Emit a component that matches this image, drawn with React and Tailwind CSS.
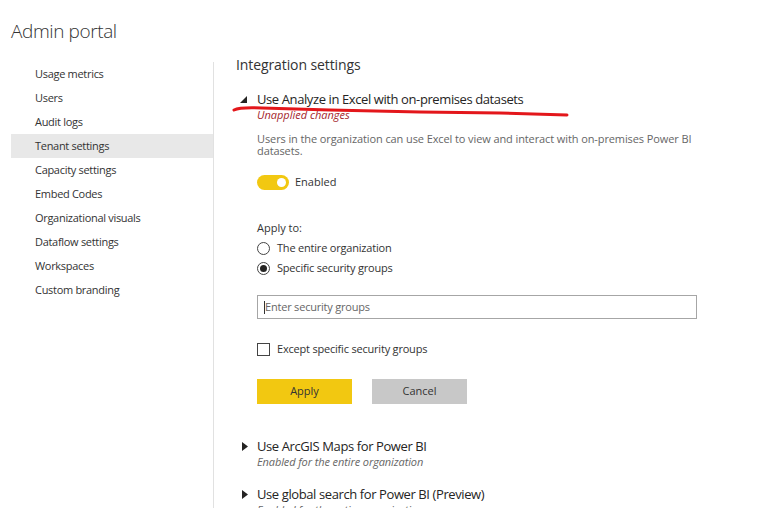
import React from 'react'

const navItems = [
    'Usage metrics',
    'Users',
    'Audit logs',
    'Tenant settings',
    'Capacity settings',
    'Embed Codes',
    'Organizational visuals',
    'Dataflow settings',
    'Workspaces',
    'Custom branding',
]

const CaretDown = () => (
    <svg width="7" height="7" viewBox="0 0 7 7" className="shrink-0">
        <path d="M7 0 L7 7 L0 7 Z" fill="#252423" />
    </svg>
)

const CaretRight = () => (
    <svg width="6" height="9" viewBox="0 0 6 9" className="shrink-0">
        <path d="M0 0 L6 4.5 L0 9 Z" fill="#252423" />
    </svg>
)

const Radio = ({ checked, label }) => (
    <div className="flex h-[20px] items-center gap-[7px]">
        <span className="flex h-[13px] w-[13px] items-center justify-center rounded-full border border-[#444]">
            {checked && <span className="h-[7px] w-[7px] rounded-full bg-[#252423]" />}
        </span>
        <span className="text-[11px] leading-[14px] tracking-[-0.2px] text-[#333]">{label}</span>
    </div>
)

const Setting = ({ title, subtitle }) => (
    <div>
        <div className="-ml-[15px] flex h-[18px] items-center gap-[9px]">
            <CaretRight />
            <span className="text-[13px] leading-[18px] tracking-[-0.4px] text-[#252423]">{title}</span>
        </div>
        <div className="text-[11px] italic leading-[14px] tracking-[-0.1px] text-[#666]">{subtitle}</div>
    </div>
)

const App = () => {
    return (
        <div className="relative h-[508px] w-[779px] overflow-hidden bg-white font-['Open_Sans',sans-serif] text-[#333]">
            <div className="h-[56px] pl-[11px] pt-[18px]">
                <h1 className="text-[19px] font-light leading-[26px] tracking-[-0.4px] text-[#333]">Admin portal</h1>
            </div>

            <div className="flex">
                <nav className="mt-[6px] h-[460px] w-[214px] shrink-0 border-r border-[#e1e1e1] pl-[11px]">
                    {navItems.map((item) => (
                        <div
                            key={item}
                            className={`flex h-[24px] items-center pl-[24px] text-[11px] tracking-[-0.3px] ${item === 'Tenant settings' ? 'bg-[#e8e8e8]' : ''}`}
                        >
                            {item}
                        </div>
                    ))}
                </nav>

                <main className="pl-[22px]">
                    <h2 className="text-[14px] leading-[18px] tracking-[-0.1px] text-[#333]">Integration settings</h2>

                    <div className="ml-[21px] mt-[16px]">
                        <div className="-ml-[17px] flex h-[18px] items-center gap-[10px]">
                            <CaretDown />
                            <span className="text-[13px] leading-[18px] tracking-[-0.4px] text-[#252423]">
                                Use Analyze in Excel with on-premises datasets
                            </span>
                        </div>
                        <div className="text-[11px] italic leading-[14px] text-[#a4262c]">Unapplied changes</div>

                        <p className="mt-[11px] w-[445px] text-[11px] leading-[12px] tracking-[-0.1px] text-[#666]">
                            Users in the organization can use Excel to view and interact with on-premises Power BI datasets.
                        </p>

                        <div className="mt-[17px] flex h-[16px] items-center gap-[6px]">
                            <span className="flex h-[15px] w-[32px] items-center justify-end rounded-full bg-[#f2c811] pr-[3px]">
                                <span className="h-[9px] w-[9px] rounded-full bg-white" />
                            </span>
                            <span className="text-[11px] text-[#333]">Enabled</span>
                        </div>

                        <div className="mt-[31px] text-[11px] leading-[14px] text-[#333]">Apply to:</div>
                        <div className="mt-[3px]">
                            <Radio label="The entire organization" />
                            <Radio checked label="Specific security groups" />
                        </div>

                        <div className="mt-[17px] flex h-[24px] w-[440px] items-center border border-[#a6a6a6] pl-[6px] pt-[1px]">
                            <span className="h-[13px] w-px bg-[#333]" />
                            <span className="text-[11px] tracking-[-0.2px] text-[#666]">Enter security groups</span>
                        </div>

                        <div className="mt-[23px] flex h-[14px] items-center gap-[7px]">
                            <span className="h-[13px] w-[13px] border border-[#444]" />
                            <span className="text-[11px] tracking-[-0.2px] text-[#333]">Except specific security groups</span>
                        </div>

                        <div className="mt-[23px] flex gap-[20px]">
                            <button className="h-[25px] w-[95px] bg-[#f2c811] text-[11px] text-[#333]">Apply</button>
                            <button className="h-[25px] w-[95px] bg-[#c8c8c8] text-[11px] text-[#333]">Cancel</button>
                        </div>

                        <div className="mt-[33px]">
                            <Setting title="Use ArcGIS Maps for Power BI" subtitle="Enabled for the entire organization" />
                        </div>
                        <div className="mt-[16px]">
                            <Setting title="Use global search for Power BI (Preview)" subtitle="Enabled for the entire organization" />
                        </div>
                    </div>
                </main>
            </div>

            {/* hand-drawn red underline over the heading */}
            <svg className="pointer-events-none absolute left-0 top-0" width="779" height="508">
                <path
                    d="M234 110 Q240 107 262 108 L330 110 L420 112 L500 113 L567 115"
                    fill="none"
                    stroke="#e3171b"
                    strokeWidth="3"
                    strokeLinecap="round"
                />
            </svg>
        </div>
    )
}

export default App
